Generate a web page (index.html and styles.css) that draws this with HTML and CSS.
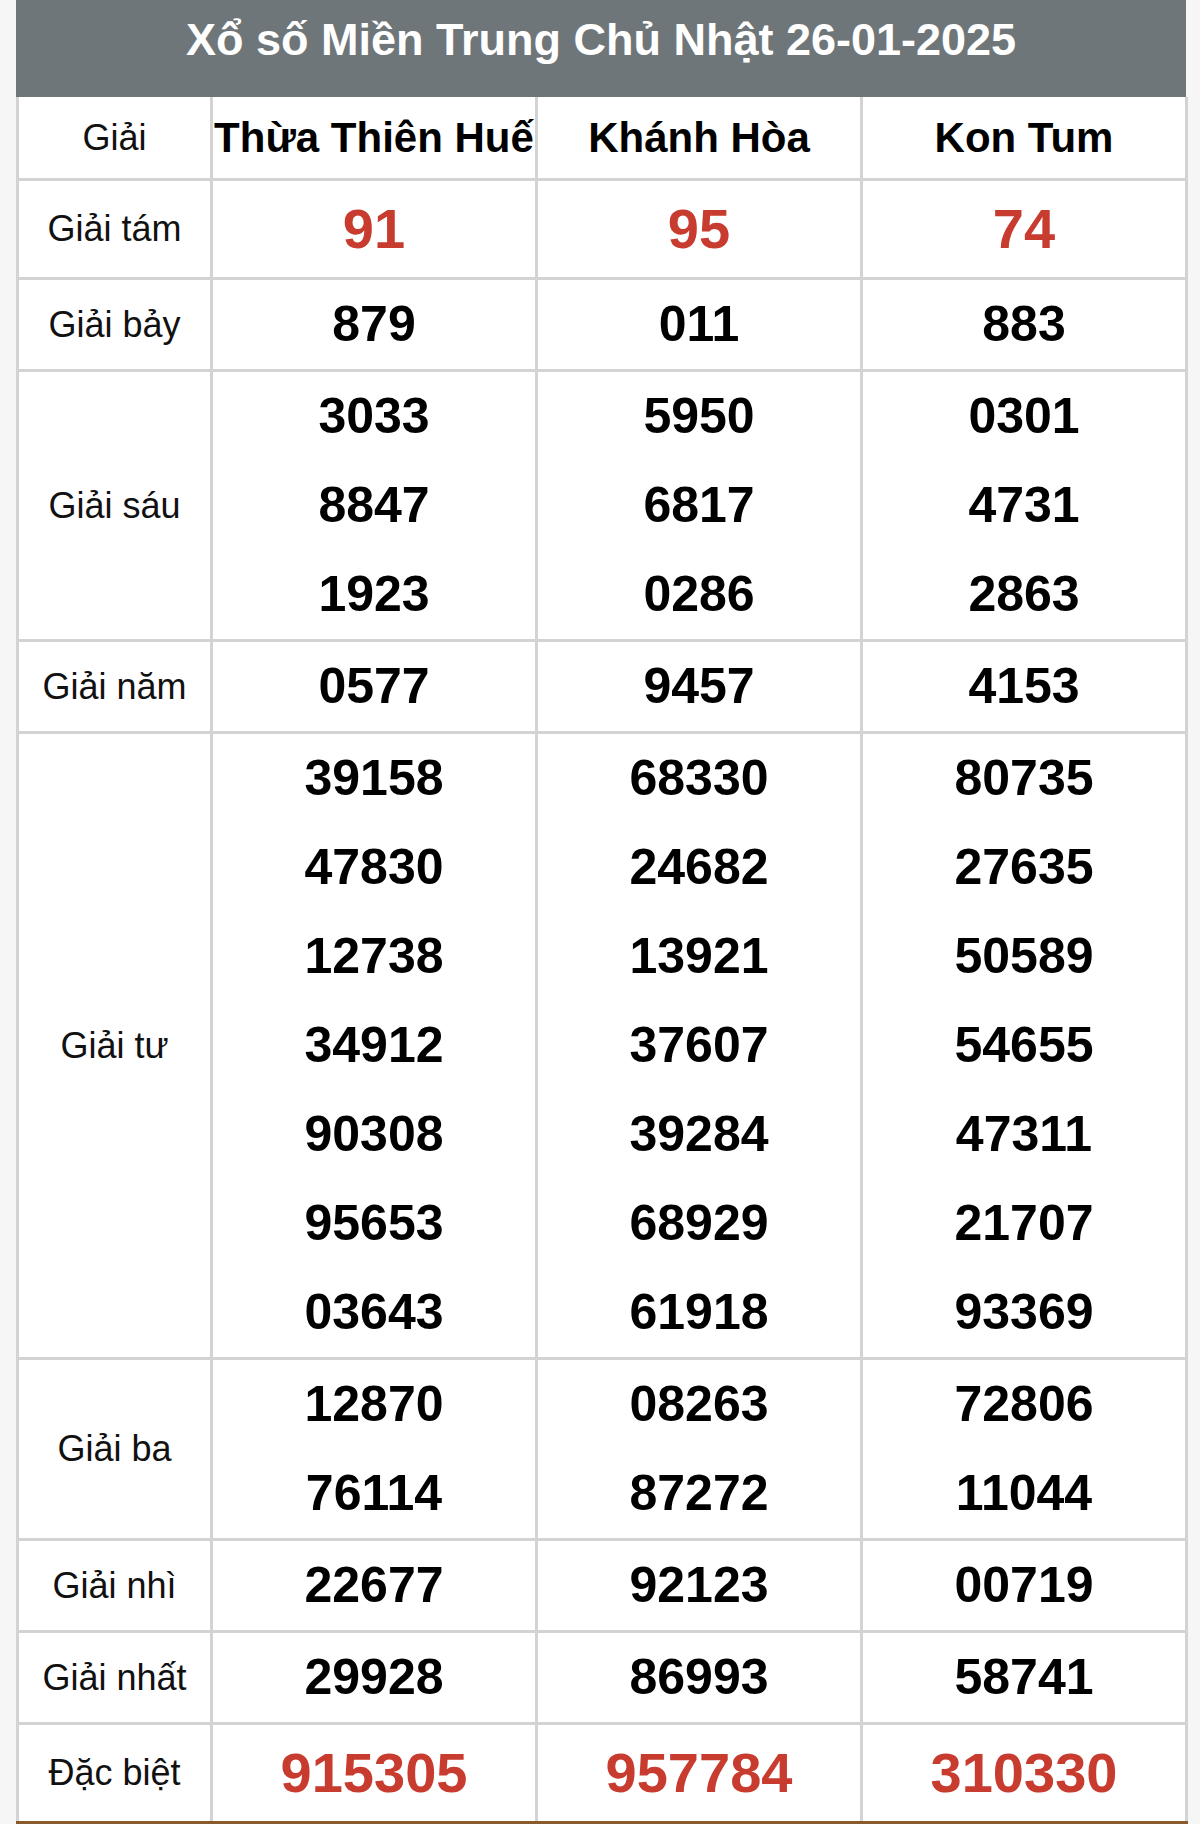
FILE: index.html
```html
<!DOCTYPE html>
<html lang="vi">
<head>
<meta charset="utf-8">
<title>Xổ số Miền Trung Chủ Nhật 26-01-2025</title>
<link rel="stylesheet" href="styles.css">
</head>
<body>
<div class="wrap">
  <div class="title">Xổ số Miền Trung Chủ Nhật 26-01-2025</div>
  <table class="kq">
    <colgroup>
      <col class="c-label"><col class="c-prov"><col class="c-prov"><col class="c-prov">
    </colgroup>
    <tr class="head">
      <td class="label">Giải</td>
      <td class="prov">Thừa Thiên Huế</td>
      <td class="prov">Khánh Hòa</td>
      <td class="prov">Kon Tum</td>
    </tr>
    <tr class="big">
      <td class="label">Giải tám</td>
      <td class="num red"><div>91</div></td>
      <td class="num red"><div>95</div></td>
      <td class="num red"><div>74</div></td>
    </tr>
    <tr>
      <td class="label">Giải bảy</td>
      <td class="num"><div>879</div></td>
      <td class="num"><div>011</div></td>
      <td class="num"><div>883</div></td>
    </tr>
    <tr>
      <td class="label">Giải sáu</td>
      <td class="num"><div>3033</div><div>8847</div><div>1923</div></td>
      <td class="num"><div>5950</div><div>6817</div><div>0286</div></td>
      <td class="num"><div>0301</div><div>4731</div><div>2863</div></td>
    </tr>
    <tr>
      <td class="label">Giải năm</td>
      <td class="num"><div>0577</div></td>
      <td class="num"><div>9457</div></td>
      <td class="num"><div>4153</div></td>
    </tr>
    <tr>
      <td class="label">Giải tư</td>
      <td class="num"><div>39158</div><div>47830</div><div>12738</div><div>34912</div><div>90308</div><div>95653</div><div>03643</div></td>
      <td class="num"><div>68330</div><div>24682</div><div>13921</div><div>37607</div><div>39284</div><div>68929</div><div>61918</div></td>
      <td class="num"><div>80735</div><div>27635</div><div>50589</div><div>54655</div><div>47311</div><div>21707</div><div>93369</div></td>
    </tr>
    <tr>
      <td class="label">Giải ba</td>
      <td class="num"><div>12870</div><div>76114</div></td>
      <td class="num"><div>08263</div><div>87272</div></td>
      <td class="num"><div>72806</div><div>11044</div></td>
    </tr>
    <tr>
      <td class="label">Giải nhì</td>
      <td class="num"><div>22677</div></td>
      <td class="num"><div>92123</div></td>
      <td class="num"><div>00719</div></td>
    </tr>
    <tr>
      <td class="label">Giải nhất</td>
      <td class="num"><div>29928</div></td>
      <td class="num"><div>86993</div></td>
      <td class="num"><div>58741</div></td>
    </tr>
    <tr class="big">
      <td class="label">Đặc biệt</td>
      <td class="num red"><div>915305</div></td>
      <td class="num red"><div>957784</div></td>
      <td class="num red"><div>310330</div></td>
    </tr>
  </table>
</div>
</body>
</html>
```

FILE: styles.css
```css
html, body {
  margin: 0;
  padding: 0;
  background: #f6f6f6;
}

body {
  font-family: "Liberation Sans", Arial, sans-serif;
  color: #000;
}

.wrap {
  width: 1170px;
  margin-left: 16px;
  background: #fff;
}

.title {
  height: 97px;
  line-height: 80px;
  background: #6f7679;
  color: #fff;
  font-size: 45px;
  font-weight: bold;
  text-align: center;
  box-sizing: border-box;
}

.kq {
  width: 100%;
  border-collapse: collapse;
  table-layout: fixed;
  background: #fff;
  border-bottom: 5px solid #8a5a2c;
}

.c-label { width: 194px; }
.c-prov { width: 325px; }

.kq td {
  border: 3px solid #d3d3d3;
  padding: 0;
  text-align: center;
  vertical-align: middle;
}

.kq tr:first-child td { border-top: none; }
.kq tr:last-child td { border-bottom: none; }

.head td {
  height: 81px;
}

.label {
  font-size: 36px;
  color: #111;
}

.prov {
  font-size: 42px;
  font-weight: bold;
  white-space: nowrap;
}

.num div {
  font-size: 50px;
  font-weight: bold;
  line-height: 89px;
}

.big .num div {
  font-size: 56px;
  line-height: 96px;
}

.red div {
  color: #c83b2f;
}
```
